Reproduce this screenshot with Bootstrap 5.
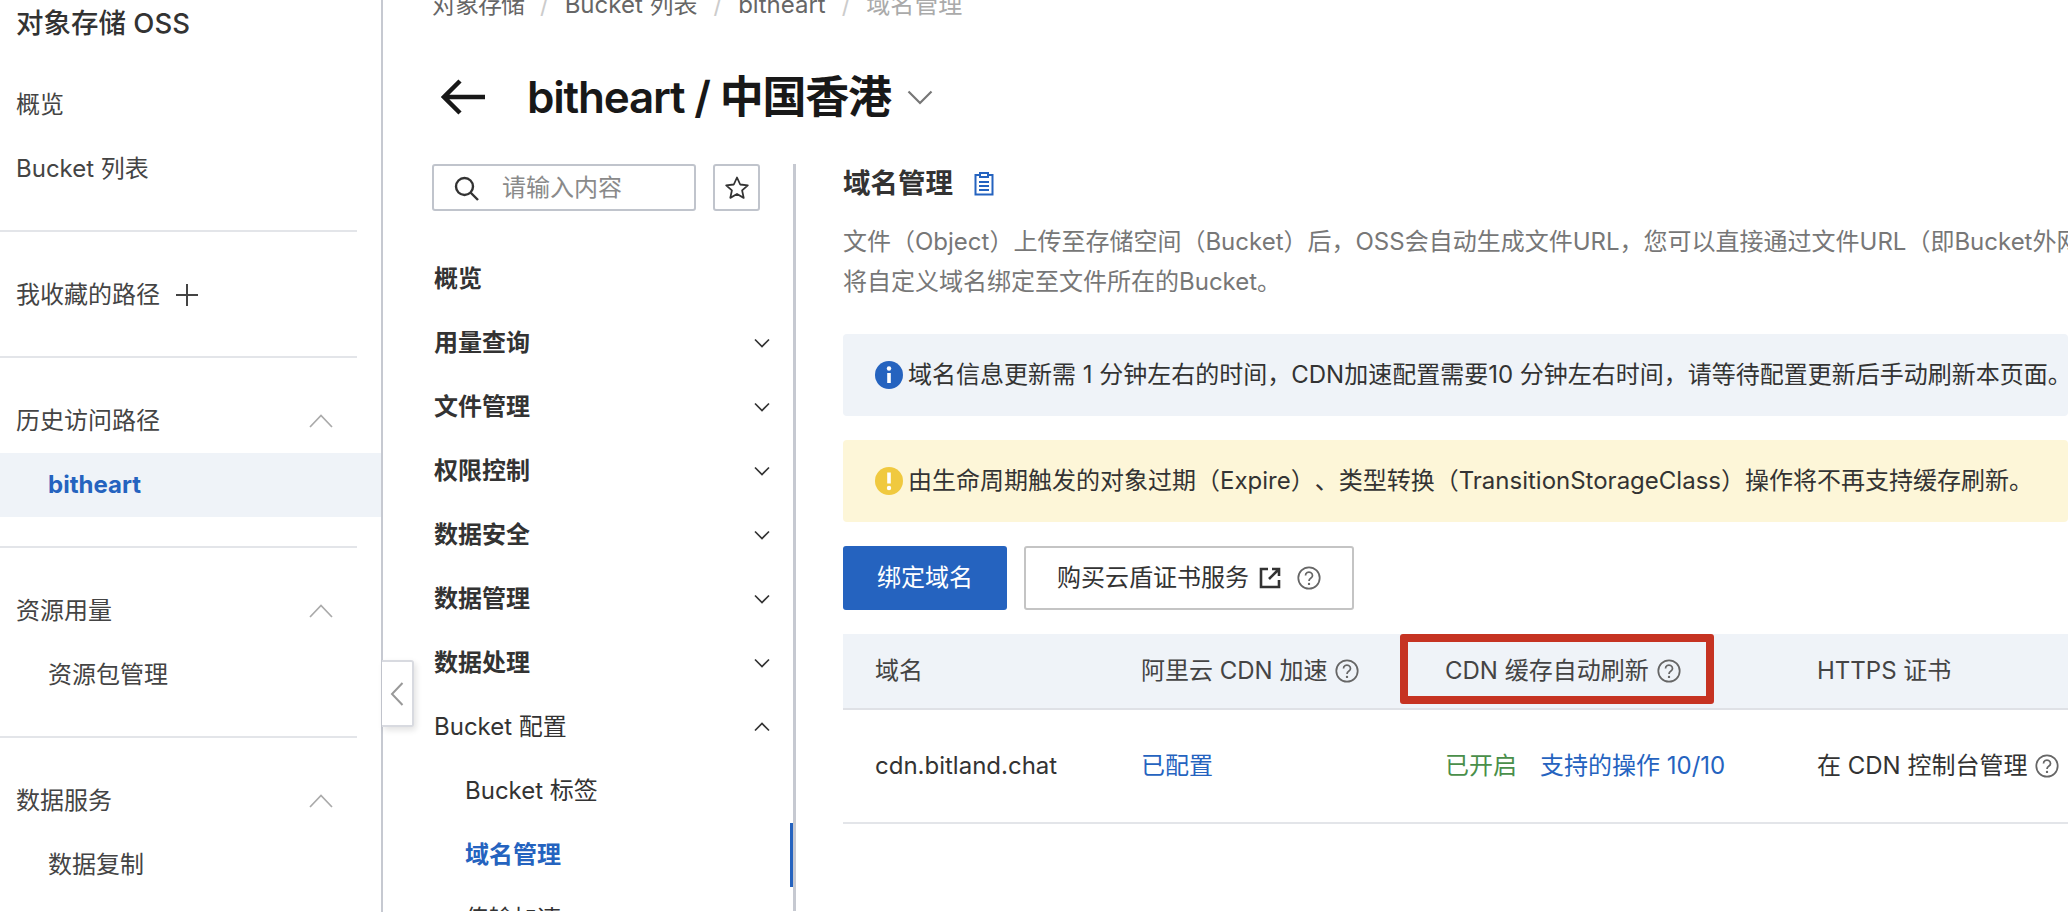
<!DOCTYPE html>
<html lang="zh-CN">
<head>
  <meta charset="UTF-8">
  <title>域名管理 - 对象存储 OSS</title>
  <link href="https://cdn.jsdelivr.net/npm/bootstrap@5.3.3/dist/css/bootstrap.min.css" rel="stylesheet">
  <style>
    html, body { height: 912px; overflow: hidden; }
    body { font-family: Inter, "Noto Sans CJK SC", sans-serif; font-size: 24px; color: #333; background: #fff; text-spacing-trim: space-all; }
    svg { flex: none; display: block; }
    .app-shell { height: 912px; }

    .side-menu { width: 383px; flex: none; border-right: 2px solid #c6c9d1; }
    .side-title { height: 48px; padding-left: 16px; font-size: 27.5px; font-weight: 500; color: #333; }
    .side-row { height: 64px; padding: 0 48px 0 16px; color: #444; }
    .side-row.sub { padding-left: 48px; }
    .side-row.current { background: #eff3f8; color: #2563bf; font-weight: 700; }
    .side-line { width: 357px; height: 2px; background: #e3e5e9; }
    .side-gap-top { height: 25px; }
    .side-gap-a { height: 31px; }
    .side-gap-b { height: 29px; }

    .page-area { min-width: 0; position: relative; }
    .crumbs { margin: -11px 0 0 49px; height: 32px; color: #666; gap: 16px; line-height: 32px; }
    .crumbs .first { letter-spacing: -1px; }
    .crumbs .sep { color: #ccc; }
    .crumbs .last { color: #aaa; }
    .page-head { margin: 46px 0 0 58px; height: 60px; }
    .page-name { font-size: 44px; font-weight: 600; letter-spacing: -1.2px; color: #181818; margin: 0 0 0 42px; }

    .inner-nav { width: 364px; flex: none; margin-left: 49px; border-right: 3px solid #c6c9d1; position: relative; height: 747px; overflow: hidden; }
    .main-split { margin-top: 37px; }
    .search-line { gap: 17px; height: 47px; }
    .search-field { width: 264px; height: 47px; border: 2px solid #c0c4cc; border-radius: 3px; padding-left: 19px; gap: 23px; color: #8a8a8a; }
    .star-btn { width: 47px; height: 47px; border: 2px solid #c0c4cc; border-radius: 3px; }
    .nav-top { margin-top: 36px; }
    .nav-row { height: 64px; padding: 0 23px 0 2px; font-weight: 600; color: #333; }
    .nav-row.plain { font-weight: 400; }
    .nav-row.sub { padding-left: 33px; font-weight: 400; }
    .nav-row.current { color: #2563bf; font-weight: 700; }
    .active-mark { width: 3px; height: 64px; background: #2563bf; right: 0; top: 0; }

    .fold-handle { left: -1px; top: 660px; width: 32px; height: 67px; background: #fff; border: 2px solid #d8dae0; border-left: 0; border-radius: 0 3px 3px 0; box-shadow: 2px 3px 6px rgba(0,0,0,.12); z-index: 2; }

    .content-pane { min-width: 0; padding-left: 47px; }
    .pane-head { height: 40px; gap: 21px; font-size: 27.5px; font-weight: 600; color: #333; }
    .pane-desc { margin-top: 18px; line-height: 40px; color: #777; white-space: nowrap; height: 80px; }
    .notice { height: 82px; padding-left: 32px; gap: 5px; border-radius: 4px; color: #333; white-space: nowrap; }
    .notice-info { margin-top: 32px; background: #eff3f8; }
    .notice-warn { margin-top: 24px; background: #fdf6d8; }
    .act-bar { margin-top: 24px; gap: 17px; }
    .act-main { width: 164px; height: 64px; background: #2563bf; border: 0; border-radius: 3px; color: #fff; font-size: 24px; padding: 0; }
    .act-sub { width: 330px; height: 64px; background: #fff; border: 2px solid #c4c4c4; border-radius: 3px; color: #333; font-size: 24px; padding: 0; gap: 10px; }
    .act-sub .help-mark { margin-left: 6px; }
    .domain-grid { margin: 24px 0 0; width: 1400px; table-layout: fixed; --bs-table-color: #333; }
    .domain-grid th, .domain-grid td { padding: 0 0 0 32px; vertical-align: middle; font-weight: 400; white-space: nowrap; }
    .domain-grid thead th { height: 75px; background: #eff3f8; border-bottom: 2px solid #dfe1e6; color: #444; }
    .domain-grid tbody td { height: 114px; border-bottom: 2px solid #e3e5e9; }
    .cell-wrap { gap: 8px; }
    .note-box { left: -13px; top: 0; width: 314px; height: 70px; border: 8px solid #c63322; border-radius: 3px; pointer-events: none; }
    .cell-link { color: #2563bf; text-decoration: none; }
    .cell-ok { color: #4a8f4a; margin-right: 23px; }
  </style>
</head>
<body>

  <svg width="0" height="0" class="position-absolute">
    <symbol id="help" viewBox="0 0 22 22">
      <circle cx="11" cy="11" r="9.8" fill="none" stroke="#666" stroke-width="1.6"/>
      <path d="M7.8 8.6a3.2 3 0 1 1 5 2.5c-1.2.8-1.8 1.3-1.8 2.6" fill="none" stroke="#666" stroke-width="1.6"/>
      <circle cx="11" cy="16.4" r="1.1" fill="#666"/>
    </symbol>
    <symbol id="down" viewBox="0 0 16 10"><path d="M1 1.5l7 7 7-7" fill="none" stroke="#333" stroke-width="1.7"/></symbol>
    <symbol id="up" viewBox="0 0 16 10"><path d="M1 8.5l7-7 7 7" fill="none" stroke="#333" stroke-width="1.7"/></symbol>
    <symbol id="up-wide" viewBox="0 0 24 14"><path d="M1 13L12 1.5 23 13" fill="none" stroke="#aaa" stroke-width="1.7"/></symbol>
  </svg>

  <div class="app-shell d-flex">
    <aside class="side-menu">
      <div class="side-title d-flex align-items-center">对象存储 OSS</div>
      <div class="side-gap-top"></div>
      <div class="side-row d-flex align-items-center">概览</div>
      <div class="side-row d-flex align-items-center">Bucket 列表</div>
      <div class="side-gap-b"></div>
      <div class="side-line"></div>
      <div class="side-gap-a"></div>
      <div class="side-row d-flex align-items-center gap-3">我收藏的路径
        <svg width="22" height="22" viewBox="0 0 22 22"><path d="M11 0v22M0 11h22" stroke="#444" stroke-width="2"/></svg>
      </div>
      <div class="side-gap-b"></div>
      <div class="side-line"></div>
      <div class="side-gap-a"></div>
      <div class="side-row d-flex align-items-center justify-content-between">历史访问路径 <svg width="24" height="14"><use href="#up-wide"/></svg></div>
      <div class="side-row sub current d-flex align-items-center">bitheart</div>
      <div class="side-gap-b"></div>
      <div class="side-line"></div>
      <div class="side-gap-a"></div>
      <div class="side-row d-flex align-items-center justify-content-between">资源用量 <svg width="24" height="14"><use href="#up-wide"/></svg></div>
      <div class="side-row sub d-flex align-items-center">资源包管理</div>
      <div class="side-gap-b"></div>
      <div class="side-line"></div>
      <div class="side-gap-a"></div>
      <div class="side-row d-flex align-items-center justify-content-between">数据服务 <svg width="24" height="14"><use href="#up-wide"/></svg></div>
      <div class="side-row sub d-flex align-items-center">数据复制</div>
    </aside>

    <main class="page-area flex-grow-1">
      <div class="fold-handle position-absolute d-flex align-items-center justify-content-center">
        <svg width="14" height="24" viewBox="0 0 14 24"><path d="M12.5 1L2 12l10.5 11" fill="none" stroke="#999" stroke-width="2"/></svg>
      </div>

      <div class="crumbs d-flex">
        <span class="first">对象存储</span><span class="sep">/</span><span>Bucket 列表</span><span class="sep">/</span><span>bitheart</span><span class="sep">/</span><span class="last">域名管理</span>
      </div>

      <div class="page-head d-flex align-items-center">
        <svg width="44" height="36" viewBox="0 0 44 36"><path d="M44 18H3M19 2L3 18l16 16" fill="none" stroke="#181818" stroke-width="4.5"/></svg>
        <h1 class="page-name">bitheart / 中国香港</h1>
        <svg class="ms-3" width="26" height="15" viewBox="0 0 26 15"><path d="M1.5 1.5L13 13 24.5 1.5" fill="none" stroke="#777" stroke-width="2.2"/></svg>
      </div>

      <div class="d-flex main-split">
        <nav class="inner-nav">
          <div class="search-line d-flex">
            <div class="search-field d-flex align-items-center">
              <svg width="26" height="26" viewBox="0 0 26 26"><circle cx="11.5" cy="11.5" r="8.5" fill="none" stroke="#333" stroke-width="2.4"/><path d="M17.5 17.5L25 25" stroke="#333" stroke-width="2.4"/></svg>
              <span>请输入内容</span>
            </div>
            <div class="star-btn d-flex align-items-center justify-content-center">
              <svg width="26" height="26" viewBox="0 0 26 26"><path d="M13 2.5l3.2 7 7.6.8-5.7 5.1 1.6 7.5L13 19l-6.7 3.9 1.6-7.5-5.7-5.1 7.6-.8z" fill="none" stroke="#333" stroke-width="1.8" stroke-linejoin="round"/></svg>
            </div>
          </div>
          <div class="nav-top">
            <div class="nav-row d-flex align-items-center">概览</div>
            <div class="nav-row d-flex align-items-center justify-content-between">用量查询 <svg width="16" height="10"><use href="#down"/></svg></div>
            <div class="nav-row d-flex align-items-center justify-content-between">文件管理 <svg width="16" height="10"><use href="#down"/></svg></div>
            <div class="nav-row d-flex align-items-center justify-content-between">权限控制 <svg width="16" height="10"><use href="#down"/></svg></div>
            <div class="nav-row d-flex align-items-center justify-content-between">数据安全 <svg width="16" height="10"><use href="#down"/></svg></div>
            <div class="nav-row d-flex align-items-center justify-content-between">数据管理 <svg width="16" height="10"><use href="#down"/></svg></div>
            <div class="nav-row d-flex align-items-center justify-content-between">数据处理 <svg width="16" height="10"><use href="#down"/></svg></div>
            <div class="nav-row plain d-flex align-items-center justify-content-between">Bucket 配置 <svg width="16" height="10"><use href="#up"/></svg></div>
            <div class="nav-row sub d-flex align-items-center">Bucket 标签</div>
            <div class="nav-row sub current d-flex align-items-center position-relative">域名管理<span class="active-mark position-absolute"></span></div>
            <div class="nav-row sub d-flex align-items-center">传输加速</div>
          </div>
        </nav>

        <section class="content-pane flex-grow-1">
          <div class="pane-head d-flex align-items-center">域名管理
            <svg width="20" height="24" viewBox="0 0 20 24"><path d="M6 3H1.5v19.5h17V3H14" fill="none" stroke="#2563bf" stroke-width="2"/><rect x="6" y="1" width="8" height="4" fill="none" stroke="#2563bf" stroke-width="2"/><path d="M5 10h10M5 14h10M5 18h10" stroke="#2563bf" stroke-width="2"/></svg>
          </div>
          <div class="pane-desc">文件（Object）上传至存储空间（Bucket）后，OSS会自动生成文件URL，您可以直接通过文件URL（即Bucket外网<br>将自定义域名绑定至文件所在的Bucket。</div>

          <div class="notice notice-info d-flex align-items-center">
            <svg width="28" height="28" viewBox="0 0 28 28"><circle cx="14" cy="14" r="14" fill="#2563bf"/><circle cx="14" cy="7.5" r="2.2" fill="#fff"/><path d="M14 12v10" stroke="#fff" stroke-width="3.6"/></svg>
            <span>域名信息更新需 1 分钟左右的时间，CDN加速配置需要10 分钟左右时间，请等待配置更新后手动刷新本页面。</span>
          </div>
          <div class="notice notice-warn d-flex align-items-center">
            <svg width="28" height="28" viewBox="0 0 28 28"><circle cx="14" cy="14" r="14" fill="#f0c93f"/><path d="M14 5.5v11" stroke="#fff" stroke-width="3.6"/><circle cx="14" cy="21" r="2.2" fill="#fff"/></svg>
            <span>由生命周期触发的对象过期（Expire）、类型转换（TransitionStorageClass）操作将不再支持缓存刷新。</span>
          </div>

          <div class="act-bar d-flex">
            <button class="btn act-main" type="button">绑定域名</button>
            <button class="btn act-sub d-flex align-items-center justify-content-center" type="button">购买云盾证书服务
              <svg width="22" height="22" viewBox="0 0 22 22"><path d="M9 2H2v18h18v-7" fill="none" stroke="#333" stroke-width="2.6"/><path d="M10 12l9-9M13 2h7v7" fill="none" stroke="#333" stroke-width="2.6"/></svg>
              <svg class="help-mark" width="24" height="24"><use href="#help"/></svg>
            </button>
          </div>

          <table class="table domain-grid">
            <colgroup><col style="width:266px"><col style="width:304px"><col style="width:372px"><col></colgroup>
            <thead>
              <tr>
                <th>域名</th>
                <th><div class="d-flex align-items-center cell-wrap">阿里云 CDN 加速 <svg width="24" height="24"><use href="#help"/></svg></div></th>
                <th class="position-relative"><div class="d-flex align-items-center cell-wrap">CDN 缓存自动刷新 <svg width="24" height="24"><use href="#help"/></svg></div><span class="note-box position-absolute"></span></th>
                <th>HTTPS 证书</th>
              </tr>
            </thead>
            <tbody>
              <tr>
                <td>cdn.bitland.chat</td>
                <td><a class="cell-link" href="#">已配置</a></td>
                <td><span class="cell-ok">已开启</span><a class="cell-link" href="#">支持的操作 10/10</a></td>
                <td><div class="d-flex align-items-center cell-wrap">在 CDN 控制台管理 <svg width="24" height="24"><use href="#help"/></svg></div></td>
              </tr>
            </tbody>
          </table>
        </section>
      </div>
    </main>
  </div>

  <script src="https://cdn.jsdelivr.net/npm/bootstrap@5.3.3/dist/js/bootstrap.bundle.min.js"></script>
</body>
</html>
